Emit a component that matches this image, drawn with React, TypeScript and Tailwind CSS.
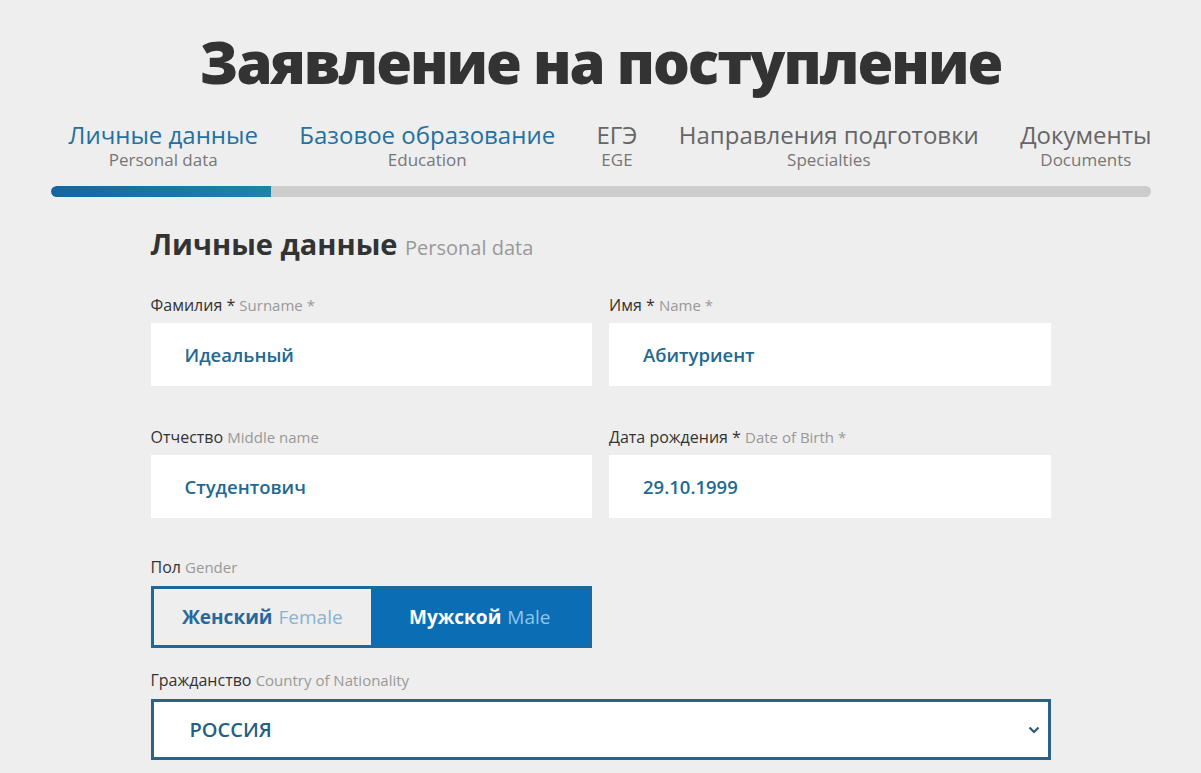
import React from "react";

const tabs = [
  { ru: "Личные данные", en: "Personal data", active: true },
  { ru: "Базовое образование", en: "Education", active: true },
  { ru: "ЕГЭ", en: "EGE", active: false },
  { ru: "Направления подготовки", en: "Specialties", active: false },
  { ru: "Документы", en: "Documents", active: false },
];

function Field({ ru, en, value }: { ru: string; en: string; value: string }) {
  return (
    <div className="flex flex-col">
      <div className="h-[20px] text-[16px] leading-[20px] text-[#333333] whitespace-nowrap">
        {ru} <span className="text-[#999999] text-[15px]">{en}</span>
      </div>
      <div className="mt-[8px] h-[63px] bg-white flex items-center pl-[34px] text-[18.5px] font-semibold text-[#23698f]">
        {value}
      </div>
    </div>
  );
}

export default function App() {
  return (
    <div
      className="min-h-[773px] w-full bg-[#eeeeee] overflow-hidden"
      style={{ fontFamily: '"Open Sans", "Noto Sans", sans-serif' }}
    >
      <h1 className="pt-[33px] text-center text-[58px] leading-[58px] font-extrabold text-[#333333] tracking-[-2px]">
        Заявление на поступление
      </h1>

      <div className="w-[1100px] mx-auto mt-[31px]">
        <div className="flex justify-between pl-[18px] mr-[-1px]">
          {tabs.map((t, i) => (
            <div key={i} className="flex flex-col items-center">
              <div
                className={
                  "text-[24px] leading-[26px] whitespace-nowrap " +
                  (i < 2 ? "text-[#2470a0]" : "text-[#666666]")
                }
              >
                {t.ru}
              </div>
              <div className="mt-[2px] text-[17px] leading-[20px] text-[#777777] whitespace-nowrap">{t.en}</div>
            </div>
          ))}
        </div>
        <div className="mt-[16px] h-[11px] rounded-full bg-[#cccccc] overflow-hidden">
          <div className="h-full w-[220px] bg-gradient-to-r from-[#15669f] to-[#2182a9] rounded-l-full" />
        </div>
      </div>

      <div className="w-[900px] mx-auto mt-[30px]">
        <div className="text-[29px] leading-[34px] font-bold text-[#333333]">
          Личные данные <span className="text-[20px] font-normal text-[#999999]">Personal data</span>
        </div>

        <div className="mt-[30px] grid grid-cols-2 gap-x-[17px] gap-y-[41px]">
          <Field ru="Фамилия *" en="Surname *" value="Идеальный" />
          <Field ru="Имя *" en="Name *" value="Абитуриент" />
          <Field ru="Отчество" en="Middle name" value="Студентович" />
          <Field ru="Дата рождения *" en="Date of Birth *" value="29.10.1999" />
        </div>

        <div className="mt-[39px] h-[20px] text-[16px] leading-[20px] text-[#333333]">
          Пол <span className="text-[#999999] text-[15px]">Gender</span>
        </div>
        <div className="mt-[9px] w-[441px] h-[62px] border-[3px] border-[#1b6a9f] flex">
          <div className="flex-1 flex items-center justify-center text-[19px] bg-[#eeeeee]">
            <span className="font-bold text-[#266a9b]">Женский</span>
            <span className="ml-[6px] text-[#86b3d3]">Female</span>
          </div>
          <div className="flex-1 flex items-center justify-center text-[19px] bg-[#0b6db3]">
            <span className="font-bold text-white">Мужской</span>
            <span className="ml-[6px] text-[#8fc6ee]">Male</span>
          </div>
        </div>

        <div className="mt-[22px] h-[20px] text-[16px] leading-[20px] text-[#333333]">
          Гражданство <span className="text-[#999999] text-[15px]">Country of Nationality</span>
        </div>
        <div className="mt-[9px] h-[61px] border-[3px] border-[#2a6385] bg-white flex items-center justify-between pl-[36px] pr-[8px]">
          <span className="text-[20px] font-semibold text-[#245f85]">РОССИЯ</span>
          <svg width="12" height="8" viewBox="0 0 12 8" fill="none">
            <path d="M1.5 1.5 L6 6 L10.5 1.5" stroke="#2a5a75" strokeWidth="2.2" />
          </svg>
        </div>
      </div>
    </div>
  );
}
